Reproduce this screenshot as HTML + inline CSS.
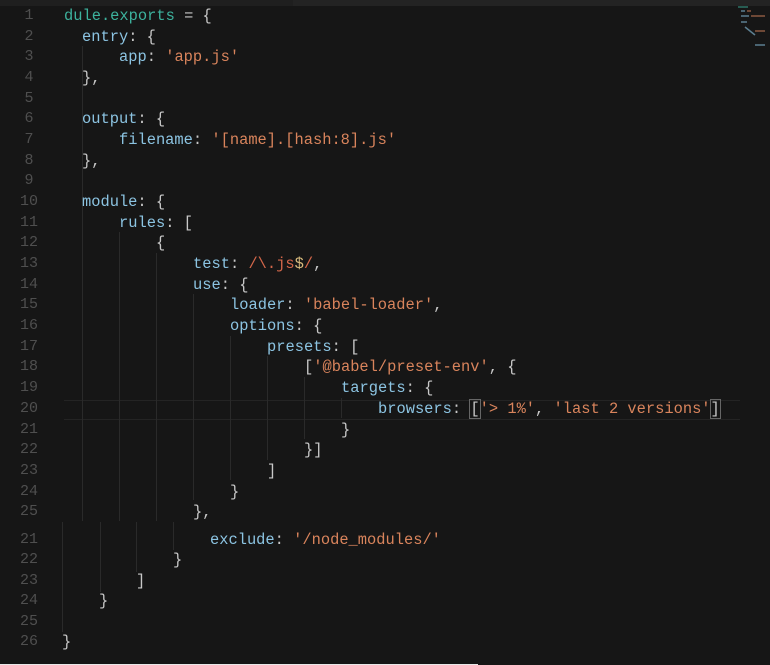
<!DOCTYPE html>
<html><head><meta charset="utf-8"><style>
html,body{margin:0;padding:0;background:#161616;width:770px;height:665px;overflow:hidden;position:relative;}
.top{position:absolute;left:0;top:0;width:770px;height:6px;background:#1f1f1f;}
.top2{position:absolute;left:293px;top:0;width:477px;height:6px;background:#232323;}
.ln{position:absolute;left:14px;width:30px;color:#4f4f4f;font:15px "Liberation Mono",monospace;text-align:center;line-height:20px;margin-top:1px;}
.c{position:absolute;font:15.4px "Liberation Mono",monospace;line-height:20px;white-space:pre;color:#c8c8c8;margin-top:1px;}
.k{color:#8cc4e2}.t{color:#3db39e}.s{color:#d9845c}.r{color:#d4674a}.y{color:#d7ba7d}
.g{position:absolute;width:1px;background:#2a2a2a;}
.hl{position:absolute;left:64px;top:400px;width:676px;height:18px;border-top:1px solid #242424;border-bottom:1px solid #242424;}
.br{outline:1px solid #666;}
.bot{position:absolute;left:0;top:664px;width:478px;height:1px;background:#e8e8e8;}
</style></head><body>
<div class="top"></div><div class="top2"></div>
<div class="hl"></div>
<div class="g" style="left:82px;top:46px;height:475px"></div>
<div class="g" style="left:119px;top:232px;height:289px"></div>
<div class="g" style="left:156px;top:253px;height:268px"></div>
<div class="g" style="left:193px;top:294px;height:206px"></div>
<div class="g" style="left:230px;top:336px;height:144px"></div>
<div class="g" style="left:267px;top:356px;height:104px"></div>
<div class="g" style="left:304px;top:377px;height:62px"></div>
<div class="g" style="left:341px;top:398px;height:20px"></div>
<div class="g" style="left:62px;top:522px;height:110px"></div>
<div class="g" style="left:100px;top:522px;height:70px"></div>
<div class="g" style="left:136px;top:522px;height:50px"></div>
<div class="g" style="left:173px;top:522px;height:28px"></div>

<div class="ln" style="top:5px">1</div><div class="c" style="left:64px;top:5px"><span class="t">dule.exports</span> = {</div>
<div class="ln" style="top:26px">2</div><div class="c" style="left:82px;top:26px"><span class="k">entry</span>: {</div>
<div class="ln" style="top:46px">3</div><div class="c" style="left:119px;top:46px"><span class="k">app</span>: <span class="s">'app.js'</span></div>
<div class="ln" style="top:67px">4</div><div class="c" style="left:82px;top:67px">},</div>
<div class="ln" style="top:88px">5</div>
<div class="ln" style="top:108px">6</div><div class="c" style="left:82px;top:108px"><span class="k">output</span>: {</div>
<div class="ln" style="top:129px">7</div><div class="c" style="left:119px;top:129px"><span class="k">filename</span>: <span class="s">'[name].[hash:8].js'</span></div>
<div class="ln" style="top:150px">8</div><div class="c" style="left:82px;top:150px">},</div>
<div class="ln" style="top:170px">9</div>
<div class="ln" style="top:191px">10</div><div class="c" style="left:82px;top:191px"><span class="k">module</span>: {</div>
<div class="ln" style="top:212px">11</div><div class="c" style="left:119px;top:212px"><span class="k">rules</span>: [</div>
<div class="ln" style="top:232px">12</div><div class="c" style="left:156px;top:232px">{</div>
<div class="ln" style="top:253px">13</div><div class="c" style="left:193px;top:253px"><span class="k">test</span>: <span class="r">/\.js</span><span class="y">$</span><span class="r">/</span>,</div>
<div class="ln" style="top:274px">14</div><div class="c" style="left:193px;top:274px"><span class="k">use</span>: {</div>
<div class="ln" style="top:294px">15</div><div class="c" style="left:230px;top:294px"><span class="k">loader</span>: <span class="s">'babel-loader'</span>,</div>
<div class="ln" style="top:315px">16</div><div class="c" style="left:230px;top:315px"><span class="k">options</span>: {</div>
<div class="ln" style="top:336px">17</div><div class="c" style="left:267px;top:336px"><span class="k">presets</span>: [</div>
<div class="ln" style="top:356px">18</div><div class="c" style="left:304px;top:356px">[<span class="s">'@babel/preset-env'</span>, {</div>
<div class="ln" style="top:377px">19</div><div class="c" style="left:341px;top:377px"><span class="k">targets</span>: {</div>
<div class="ln" style="top:398px">20</div><div class="c" style="left:378px;top:398px"><span class="k">browsers</span>: <span class="br">[</span><span class="s">'&gt; 1%'</span>, <span class="s">'last 2 versions'</span><span class="br">]</span></div>
<div class="ln" style="top:419px">21</div><div class="c" style="left:341px;top:419px">}</div>
<div class="ln" style="top:439px">22</div><div class="c" style="left:304px;top:439px">}]</div>
<div class="ln" style="top:460px">23</div><div class="c" style="left:267px;top:460px">]</div>
<div class="ln" style="top:481px">24</div><div class="c" style="left:230px;top:481px">}</div>
<div class="ln" style="top:501px">25</div><div class="c" style="left:193px;top:501px">},</div>

<div class="ln" style="top:529px">21</div><div class="c" style="left:210px;top:529px"><span class="k">exclude</span>: <span class="s">'/node_modules/'</span></div>
<div class="ln" style="top:549px">22</div><div class="c" style="left:173px;top:549px">}</div>
<div class="ln" style="top:570px">23</div><div class="c" style="left:136px;top:570px">]</div>
<div class="ln" style="top:590px">24</div><div class="c" style="left:99px;top:590px">}</div>
<div class="ln" style="top:611px">25</div>
<div class="ln" style="top:631px">26</div><div class="c" style="left:62px;top:631px">}</div>

<svg style="position:absolute;left:735px;top:5px" width="35" height="50">
<g stroke-width="1.5" opacity="0.6">
<line x1="3" y1="2" x2="13" y2="2" stroke="#3db39e"/>
<line x1="6" y1="6" x2="10" y2="6" stroke="#8cc4e2"/><line x1="12" y1="6" x2="16" y2="6" stroke="#d9845c"/>
<line x1="6" y1="11" x2="14" y2="11" stroke="#8cc4e2"/><line x1="16" y1="11" x2="30" y2="11" stroke="#d9845c"/>
<line x1="6" y1="17" x2="12" y2="17" stroke="#8cc4e2"/>
<line x1="10" y1="22" x2="20" y2="30" stroke="#8cc4e2"/><line x1="20" y1="26" x2="30" y2="26" stroke="#d9845c"/>
<line x1="20" y1="40" x2="30" y2="40" stroke="#8cc4e2"/>
</g></svg>
<div class="bot"></div>
</body></html>
